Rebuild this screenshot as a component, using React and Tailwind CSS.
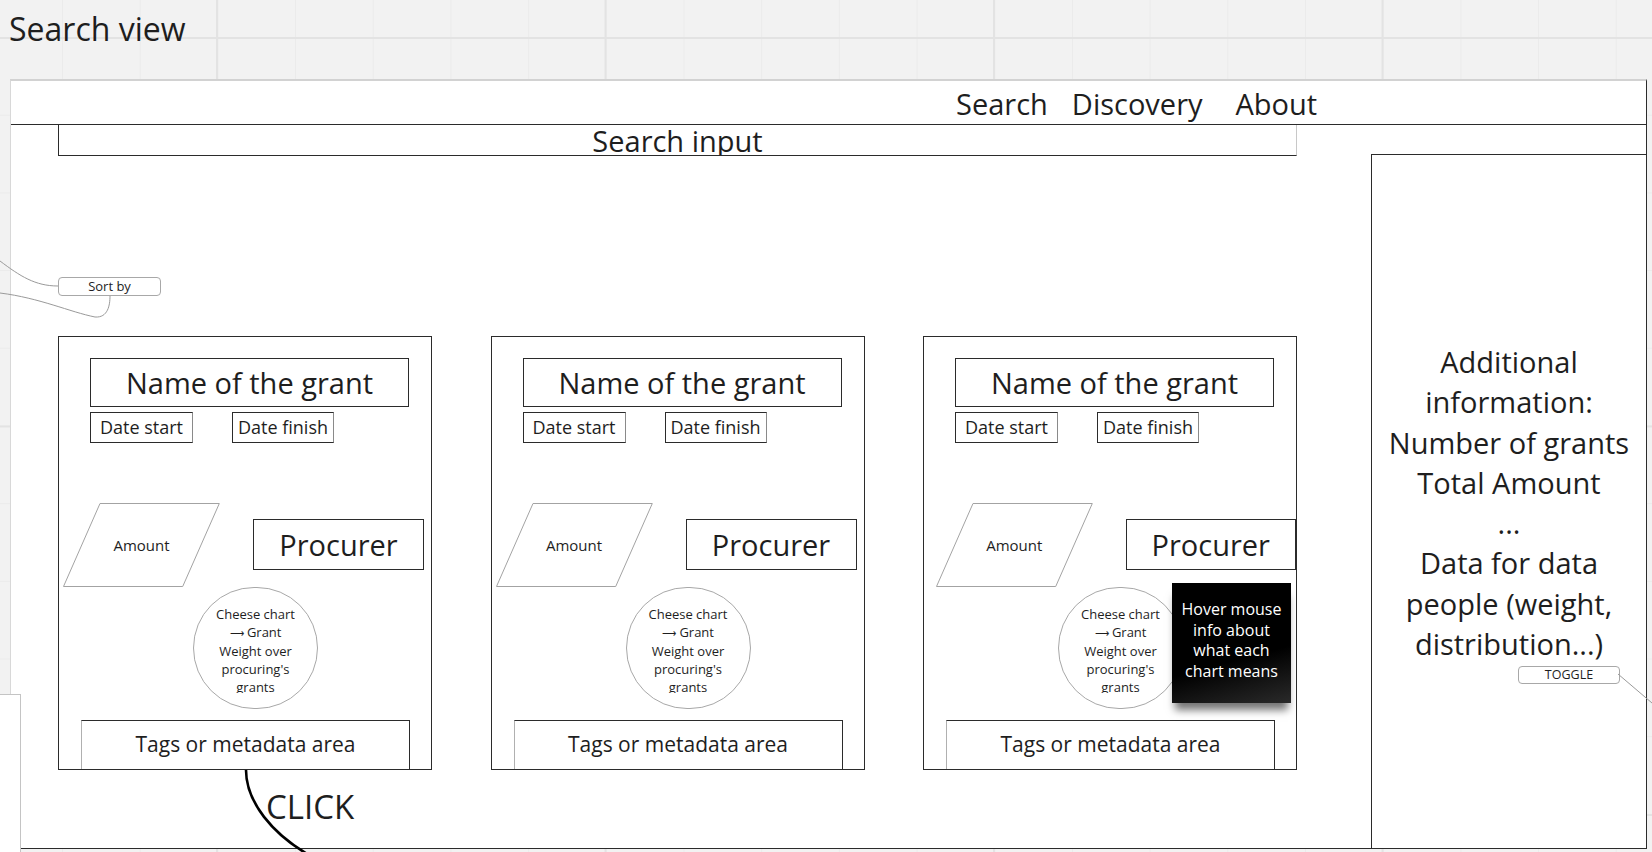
// Whiteboard wireframe: "Search view" frame with grant cards and an info side panel

function Amount() {
  return (
    <div className="relative w-[157px] h-[84px] flex items-center justify-center">
      <svg className="absolute inset-0" width="157" height="84" viewBox="0 0 157 84">
        <polygon points="37,0.5 156.3,0.5 119.7,83.5 0.5,83.5" fill="white" stroke="#a3a3a3" strokeWidth="1" />
      </svg>
      <span className="relative text-[15px] leading-[20px]">Amount</span>
    </div>
  );
}

function CheeseChart() {
  return (
    <div className="w-[125px] h-[122px] rounded-full border border-[#a8a8a8] flex flex-col items-center pt-[17px]">
      <div className="h-[88px] overflow-hidden text-center text-[13px] leading-[18px]">
        Cheese chart
        <br />
        <span className="text-[10px]">⟶</span> Grant
        <br />
        Weight over
        <br />
        procuring's
        <br />
        grants
      </div>
    </div>
  );
}

// One grant card; `shift` nudges the amount/procurer row, `tooltip` shows the hover info
function GrantCard({ shift = false, tooltip = false }) {
  return (
    <div className="relative w-[374px] h-[434px] border border-[#2b2b2b] bg-white flex flex-col">
      <div className="mt-[21px] ml-[31px] w-[319px] h-[49px] border border-[#2b2b2b] flex items-center justify-center text-[29px]">
        Name of the grant
      </div>
      <div className="mt-[5px] ml-[31px] flex gap-[39px]">
        <div className="w-[103px] h-[31px] border border-[#2b2b2b] border-r-[#8a8a8a] flex items-center justify-center text-[18px]">
          Date start
        </div>
        <div className="w-[102px] h-[31px] border border-[#2b2b2b] border-r-[#8a8a8a] flex items-center justify-center text-[18px]">
          Date finish
        </div>
      </div>
      <div className={`mt-[60px] h-[83px] flex items-start ${shift ? "ml-[12px]" : "ml-[4px]"}`}>
        <Amount />
        <div className="mt-[16px] ml-[33px] w-[171px] h-[51px] border border-[#2b2b2b] bg-white flex items-center justify-center text-[29px]">
          Procurer
        </div>
      </div>
      <div className="mt-[1px] ml-[134px]">
        <CheeseChart />
      </div>
      <div className="mt-[11px] ml-[22px] w-[329px] flex-1 border-t border-r border-[#2b2b2b] border-l border-l-[#b0b0b0] flex items-center justify-center text-[21px]">
        Tags or metadata area
      </div>
      {tooltip && (
        <div className="absolute left-[248px] top-[246px] w-[119px] h-[120px] bg-[linear-gradient(165deg,#000_62%,#2a2a2a)] shadow-[0_10px_8px_-3px_rgba(0,0,0,0.55)] text-white text-center text-[16px] leading-[20.5px] font-medium pt-[16px]">
          Hover mouse
          <br />
          info about
          <br />
          what each
          <br />
          chart means
        </div>
      )}
    </div>
  );
}

function SidePanel() {
  return (
    <div className="ml-[74px] mt-[29px] flex-1 border-l border-t border-[#2b2b2b] flex flex-col items-center pt-[187px]">
      <div className="text-center text-[29px] leading-[40.25px]">
        Additional
        <br />
        information:
        <br />
        Number of grants
        <br />
        Total Amount
        <br />
        ...
        <br />
        Data for data
        <br />
        people (weight,
        <br />
        distribution...)
      </div>
      <div className="mt-[2px] self-start ml-[146px] w-[102px] h-[18px] rounded-[4px] border border-[#a8a8a8] flex items-center justify-center text-[12.5px]">
        TOGGLE
      </div>
    </div>
  );
}

export default function App() {
  return (
    <div className="relative w-full h-[852px] overflow-hidden bg-[#f2f2f2] bg-[image:linear-gradient(to_right,#e3e3e3_2px,transparent_2px),linear-gradient(to_bottom,#e3e3e3_2px,transparent_2px),linear-gradient(to_right,#ebebeb_1px,transparent_1px),linear-gradient(to_bottom,#ebebeb_1px,transparent_1px)] bg-[length:388.5px_388.5px,388.5px_388.5px,77.7px_77.7px,77.7px_77.7px] bg-[position:216px_37px,216px_37px,62px_37px,62px_37px] font-['Open_Sans',sans-serif] text-[#1e1e1e]">
      <div className="pt-[7px] pl-[9px] text-[32px] leading-[44px]">Search view</div>

      {/* frame */}
      <div className="mt-[28px] ml-[10px] w-[1637px] h-[770px] bg-white border-t-2 border-t-[#d2d2d2] border-l border-l-[#d8d8d8] border-r border-r-[#2b2b2b] border-b border-b-[#2b2b2b] flex flex-col">
        <div className="h-[44px] shrink-0 border-b border-[#2b2b2b] pt-[4px] pl-[945px] flex text-[29px] leading-[38px]">
          <span>Search</span>
          <span className="ml-[24px]">Discovery</span>
          <span className="ml-[33px]">About</span>
        </div>

        <div className="flex-1 flex">
          <div className="ml-[47px] w-[1239px] flex flex-col">
            <div className="h-[31px] border-l border-b border-[#2b2b2b] border-r border-r-[#c8c8c8] overflow-hidden flex justify-center">
              <span className="text-[29px] leading-[32px]">Search input</span>
            </div>
            <div className="mt-[121px] w-[103px] h-[19px] rounded-[4px] border border-[#a8a8a8] flex items-center justify-center text-[13px]">
              Sort by
            </div>
            <div className="mt-[40px] flex justify-between">
              <GrantCard />
              <GrantCard />
              <GrantCard shift tooltip />
            </div>
            <div className="mt-[14px] ml-[208px] text-[33px] leading-[45px]">CLICK</div>
          </div>
          <SidePanel />
        </div>
      </div>

      {/* neighbouring frame peeking in at the bottom left */}
      <div className="absolute left-0 top-[694px] w-[21px] h-[158px] bg-white border-t border-r border-[#c4c4c4]" />

      {/* connectors */}
      <svg className="absolute inset-0 pointer-events-none" width="1652" height="852" viewBox="0 0 1652 852">
        <path d="M0 261 C 20 276, 35 286, 58 286" fill="none" stroke="#9a9a9a" strokeWidth="1" />
        <path d="M0 293 C 40 298, 70 312, 95 317 C 108 318, 110 305, 110 296" fill="none" stroke="#9a9a9a" strokeWidth="1" />
        <path d="M1618 674 L 1652 703" fill="none" stroke="#9a9a9a" strokeWidth="1" />
        <path d="M246 770 C 246 800, 270 835, 318 860" fill="none" stroke="#000" strokeWidth="2.6" />
      </svg>
    </div>
  );
}
